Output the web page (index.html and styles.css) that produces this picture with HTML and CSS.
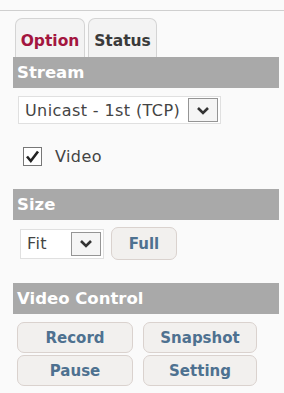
FILE: index.html
```html
<!DOCTYPE html>
<html lang="en">
<head>
    <meta charset="UTF-8">
    <title>Live View Options</title>
    <link rel="stylesheet" href="styles.css">
</head>
<body>
    <div class="topline"></div>
    <div class="panel">
        <div class="tabs">
            <span class="tab active">Option</span>
            <span class="tab">Status</span>
        </div>

        <div class="section-head">Stream</div>
        <div class="select stream">
            <span class="value">Unicast - 1st (TCP)</span>
            <span class="arrow"><svg width="14" height="9" viewBox="0 0 14 9"><path d="M2 2 L7 7 L12 2" fill="none" stroke="#333" stroke-width="2.6"/></svg></span>
        </div>
        <label class="check">
            <span class="box"><svg width="15" height="15" viewBox="0 0 15 15"><path d="M2 7.5 L5.8 12 L13 2.5" fill="none" stroke="#222" stroke-width="2.6"/></svg></span>
            Video
        </label>

        <div class="section-head">Size</div>
        <div class="size-row">
            <div class="select fit">
                <span class="value">Fit</span>
                <span class="arrow"><svg width="14" height="9" viewBox="0 0 14 9"><path d="M2 2 L7 7 L12 2" fill="none" stroke="#333" stroke-width="2.6"/></svg></span>
            </div>
            <button class="btn full">Full</button>
        </div>

        <div class="section-head">Video Control</div>
        <div class="controls">
            <button class="btn">Record</button>
            <button class="btn">Snapshot</button>
            <button class="btn">Pause</button>
            <button class="btn">Setting</button>
        </div>
    </div>
</body>
</html>
```

FILE: styles.css
```css
body { margin: 0; background: #fafafa; font-family: "DejaVu Sans", Verdana, sans-serif; color: #444; }
.topline { margin-top: 10px; height: 1px; background: #cfcfcf; }
.panel { width: 266px; margin-left: 13px; padding-top: 7px; }

.tabs { display: flex; gap: 3px; margin-left: 2px; }
.tab { box-sizing: border-box; height: 39px; padding-top: 13px; text-align: center; font-size: 15.5px; line-height: 18px; font-weight: bold; border: 1px solid #d4d4d4; border-bottom: none; border-radius: 7px 7px 0 0; background: #f3f3f3; color: #3a3a3a; }
.tab.active { width: 70px; color: #a3163f; }
.tab + .tab { width: 69px; }

.section-head { background: #a9a9a9; color: #fff; font-size: 16.5px; font-weight: bold; height: 31px; line-height: 31px; padding-left: 4px; }

.select { box-sizing: border-box; display: flex; align-items: center; justify-content: space-between; border: 1px solid #e0e0e0; background: #fff; font-size: 16px; letter-spacing: 0.4px; padding: 0 2px 0 6px; }
.select.stream { width: 203px; height: 28px; margin: 8px 0 0 5px; }
.select.fit { width: 84px; height: 30px; }
.arrow { box-sizing: border-box; display: flex; align-items: center; justify-content: center; width: 30px; height: 24px; border: 1px solid #959595; background: #f5f5f5; }

.check { display: flex; align-items: center; gap: 13px; font-size: 16px; letter-spacing: 0.4px; margin: 23px 0 24px 10px; height: 18px; }
.box { box-sizing: border-box; display: flex; align-items: center; justify-content: center; width: 19px; height: 19px; border: 1px solid #777; background: #fff; }

.size-row { display: flex; align-items: center; gap: 7px; margin: 7px 0 23px 7px; height: 33px; }

.btn { box-sizing: border-box; font-family: "DejaVu Sans", Verdana, sans-serif; font-size: 15px; font-weight: bold; color: #4e7190; background: #f2f0ee; border: 1px solid #dad2ce; border-radius: 7px; padding: 0; cursor: pointer; }
.btn.full { width: 66px; height: 33px; }
.controls { display: grid; grid-template-columns: 116px 114px; grid-auto-rows: 31px; gap: 2px 10px; padding: 8px 0 0 4px; }
```
